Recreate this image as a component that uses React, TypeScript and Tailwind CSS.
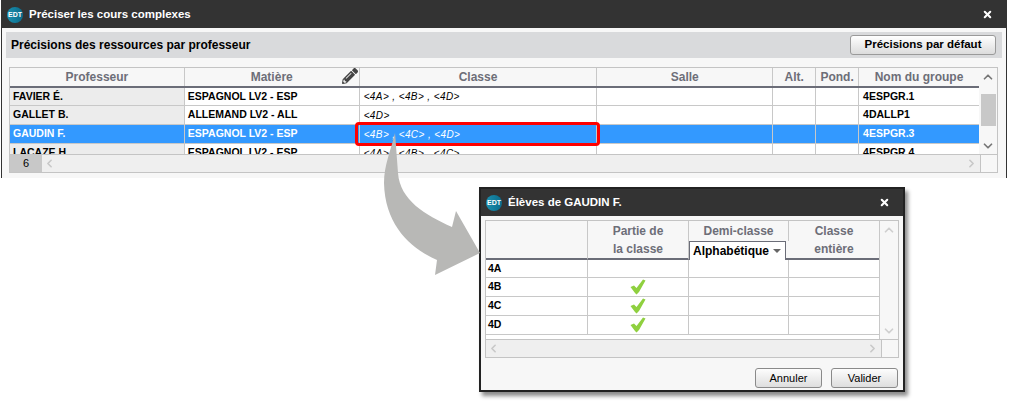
import { ChevronDown, ChevronLeft, ChevronRight, ChevronUp, X } from 'lucide-react';
import { FaPencilAlt } from 'react-icons/fa';

const teacherCols = ['w-[175px]', 'w-[175px]', 'w-[238px]', 'w-[176px]', 'w-[43px]', 'w-[43px]', 'w-[120px]'];

const teacherRows = [
  { name: 'FAVIER É.', subject: 'ESPAGNOL LV2 - ESP', classes: '<4A> , <4B> , <4D>', group: '4ESPGR.1', height: 'h-[18px]' },
  { name: 'GALLET B.', subject: 'ALLEMAND LV2 - ALL', classes: '<4D>', group: '4DALLP1', height: 'h-[19px]' },
  { name: 'GAUDIN F.', subject: 'ESPAGNOL LV2 - ESP', classes: '<4B> , <4C> , <4D>', group: '4ESPGR.3', height: 'h-[19px]', selected: true },
  { name: 'LACAZE H.', subject: 'ESPAGNOL LV2 - ESP', classes: '<4A> , <4B> , <4C>', group: '4ESPGR.4', height: 'h-[19px]' },
];

function EdtLogo() {
  return (
    <div className="flex h-4 w-4 shrink-0 items-center justify-center rounded-full bg-gradient-to-r from-[#1b8fae] to-[#0a6c8c] text-[7px] font-bold leading-none text-white">
      EDT
    </div>
  );
}

function TitleBar({ title, height }: { title: string; height: string }) {
  return (
    <div className={`flex shrink-0 items-center bg-[#333333] pl-[5px] pr-[13px] text-white ${height}`}>
      <EdtLogo />
      <span className="ml-[6px] flex-1 text-[11.5px] font-bold">{title}</span>
      <X size={11} strokeWidth={4.5} />
    </div>
  );
}

function Check() {
  return (
    <svg width="16" height="16" viewBox="0 0 16 16">
      <path d="M0.5 8 L4 6.5 L6.5 9 L13 0.5 L15.5 1.5 L9 13 L6.5 15.5 L5 14 Z" fill="#8fd03f" />
    </svg>
  );
}

function ScrollCol({ thumb, pale }: { thumb?: boolean; pale?: boolean }) {
  const tone = pale ? 'text-[#cfcfcf]' : 'text-[#777777]';
  return (
    <div className={`flex w-[18px] shrink-0 flex-col items-center bg-[#f7f7f7] pb-px pt-[2px] ${tone}`}>
      <ChevronUp size={14} strokeWidth={3} />
      {thumb && <div className="mt-[10px] h-[32px] w-[15px] bg-[#c8c8c8]" />}
      <div className="flex-1" />
      <ChevronDown size={14} strokeWidth={3} />
    </div>
  );
}

function TeacherTable() {
  return (
    <div className="ml-[7px] mt-[9px] flex h-[106px] w-[989px] flex-col border border-[#c4c4c4] bg-white">
      <div className="flex min-h-0 flex-1">
        <div className="flex w-[970px] flex-col overflow-hidden">
          <div className="flex h-[20px] shrink-0 border-b-2 border-[#6b6d78] bg-[#f7f7f7] text-[12px] font-bold text-[#6d6e78]">
            {['Professeur', 'Matière', 'Classe', 'Salle', 'Alt.', 'Pond.', 'Nom du groupe'].map((label, i) => (
              <div key={label} className={`relative flex items-center justify-center border-r border-[#c8c8c8] last:border-r-0 ${teacherCols[i]}`}>
                {label}
                {i === 1 && <FaPencilAlt size={16} className="absolute right-[1px] top-0 text-[#444444]" />}
              </div>
            ))}
          </div>
          {teacherRows.map((row) => (
            <div key={row.name} className={`flex shrink-0 border-b border-[#c8c8c8] text-[10.5px] font-bold ${row.height} ${row.selected ? 'bg-[#3399ff] text-white' : 'text-black'}`}>
              <div className={`flex items-center border-r border-[#c8c8c8] pl-[3px] ${teacherCols[0]} ${row.selected ? '' : 'bg-[#ececec]'}`}>{row.name}</div>
              <div className={`flex items-center border-r border-[#c8c8c8] pl-[3px] ${teacherCols[1]}`}>{row.subject}</div>
              <div className={`flex items-center border-r border-[#c8c8c8] pl-[4px] text-[10px] font-normal italic tracking-[0.4px] ${teacherCols[2]}`}>{row.classes}</div>
              <div className={`border-r border-[#c8c8c8] ${teacherCols[3]}`} />
              <div className={`border-r border-[#c8c8c8] ${teacherCols[4]}`} />
              <div className={`border-r border-[#c8c8c8] ${teacherCols[5]}`} />
              <div className={`flex items-center pl-[4px] ${teacherCols[6]}`}>{row.group}</div>
            </div>
          ))}
        </div>
        <ScrollCol thumb />
      </div>
      <div className="flex h-[18px] shrink-0 border-t border-[#c4c4c4] bg-[#efefef] text-[#c8c8c8]">
        <div className="flex w-[32px] items-center justify-center bg-[#c8c8c8] text-[11px] text-black">6</div>
        <div className="flex flex-1 items-center justify-between pl-[1px] pr-[1px]">
          <ChevronLeft size={13} strokeWidth={3} />
          <ChevronRight size={13} strokeWidth={3} />
        </div>
        <div className="ml-[1px] w-[17px] border-l border-[#c4c4c4] bg-[#f7f7f7]" />
      </div>
    </div>
  );
}

const studentRows = [
  { label: '4A', checked: false, height: 'h-[18px]' },
  { label: '4B', checked: true, height: 'h-[19px]' },
  { label: '4C', checked: true, height: 'h-[19px]' },
  { label: '4D', checked: true, height: 'h-[19px]' },
];

function StudentTable() {
  return (
    <div className="ml-[4px] mt-[4px] flex h-[138px] w-[414px] flex-col border border-[#c4c4c4] bg-white">
      <div className="flex min-h-0 flex-1">
        <div className="flex w-[395px] flex-col border-r border-[#c8c8c8]">
          <div className="flex h-[39px] shrink-0 bg-[#f7f7f7] text-[12px] font-bold leading-[18px] text-[#6d6e78]">
            <div className="w-[102px] border-b-2 border-r border-[#6b6d78] border-r-[#c8c8c8]" />
            <div className="flex w-[101px] flex-col items-center justify-center border-b-2 border-r border-[#6b6d78] border-r-[#c8c8c8]">
              <span>Partie de</span>
              <span>la classe</span>
            </div>
            <div className="flex w-[100px] flex-col">
              <span className="flex h-[20px] w-full items-center justify-center border-r border-[#c8c8c8]">Demi-classe</span>
              <div className="flex h-[19px]">
                <div className="flex w-[97px] items-center justify-between border border-b-0 border-[#6b6d78] bg-white pl-[3px] pr-[4px] text-[12px] text-black">
                  Alphabétique
                  <span className="h-0 w-0 border-x-[4px] border-t-[4px] border-x-transparent border-t-[#666666]" />
                </div>
                <div className="flex-1 border-b-2 border-[#6b6d78]" />
              </div>
            </div>
            <div className="flex flex-1 flex-col items-center justify-center border-b-2 border-[#6b6d78]">
              <span>Classe</span>
              <span>entière</span>
            </div>
          </div>
          {studentRows.map((row) => (
            <div key={row.label} className={`flex shrink-0 border-b border-[#c8c8c8] text-[10.5px] font-bold text-black ${row.height}`}>
              <div className="flex w-[102px] items-center border-r border-[#c8c8c8] pl-[2px]">{row.label}</div>
              <div className="flex w-[101px] items-center justify-center border-r border-[#c8c8c8]">{row.checked && <Check />}</div>
              <div className="w-[100px] border-r border-[#c8c8c8]" />
              <div className="flex-1" />
            </div>
          ))}
        </div>
        <ScrollCol pale />
      </div>
      <div className="flex h-[18px] shrink-0 border-t border-[#c4c4c4] bg-[#efefef] text-[#c8c8c8]">
        <div className="flex flex-1 items-center justify-between pl-[1px] pr-[1px]">
          <ChevronLeft size={13} strokeWidth={3} />
          <ChevronRight size={13} strokeWidth={3} />
        </div>
        <div className="ml-[1px] w-[17px] border-l border-[#c4c4c4] bg-[#f7f7f7]" />
      </div>
    </div>
  );
}

function DialogButton({ label }: { label: string }) {
  return (
    <button className="h-[20px] w-[67px] rounded-[3px] border border-[#8a8a8a] bg-gradient-to-b from-[#fdfdfd] to-[#dedede] text-[11px] text-black">
      {label}
    </button>
  );
}

export default function App() {
  return (
    <div className="relative h-[407px] w-[1009px] overflow-hidden bg-white font-['Liberation_Sans',Arial,sans-serif]">
      {/* Main window, cut off at the bottom */}
      <div className="ml-px flex h-[178px] w-[1006px] flex-col border-x border-t border-[#333333] bg-[#f7f7f7]">
        <TitleBar title="Préciser les cours complexes" height="h-[27px]" />
        <div className="ml-[4px] mt-[4px] flex h-[26px] w-[996px] shrink-0 items-center justify-between bg-[#d9dadc] pl-[5px] pr-[6px]">
          <span className="text-[12px] font-bold text-black">Précisions des ressources par professeur</span>
          <button className="h-[20px] w-[146px] rounded-[3px] border border-[#9a9a9a] bg-gradient-to-b from-[#ffffff] to-[#dcdcdc] text-[11.5px] font-bold text-black">
            Précisions par défaut
          </button>
        </div>
        <TeacherTable />
      </div>

      {/* Student dialog */}
      <div className="ml-[479px] mt-[9px] flex h-[205px] w-[426px] flex-col border-2 border-[#222222] bg-[#f7f7f7] shadow-[3px_4px_4px_rgba(0,0,0,0.45)]">
        <TitleBar title="Élèves de GAUDIN F." height="h-[27px]" />
        <StudentTable />
        <div className="mr-[5px] mt-[10px] flex justify-end gap-[9px]">
          <DialogButton label="Annuler" />
          <DialogButton label="Valider" />
        </div>
      </div>

      {/* Highlight on the selected cell */}
      <div className="absolute left-[355px] top-[122px] h-[24px] w-[245px] rounded-[4px] border-[3px] border-[#ff0000]" />

      {/* Callout arrow */}
      <svg className="absolute left-0 top-0" width="1009" height="407" viewBox="0 0 1009 407">
        <path
          d="M395 133 C391 150 384 165 384 183 C385 225 410 248 437 260 L435 275 L480 253 L456 211 L452 227 C425 215 400 200 398 173 C397 160 396 145 395 133 Z"
          fill="#b8b8b6"
        />
      </svg>
    </div>
  );
}
